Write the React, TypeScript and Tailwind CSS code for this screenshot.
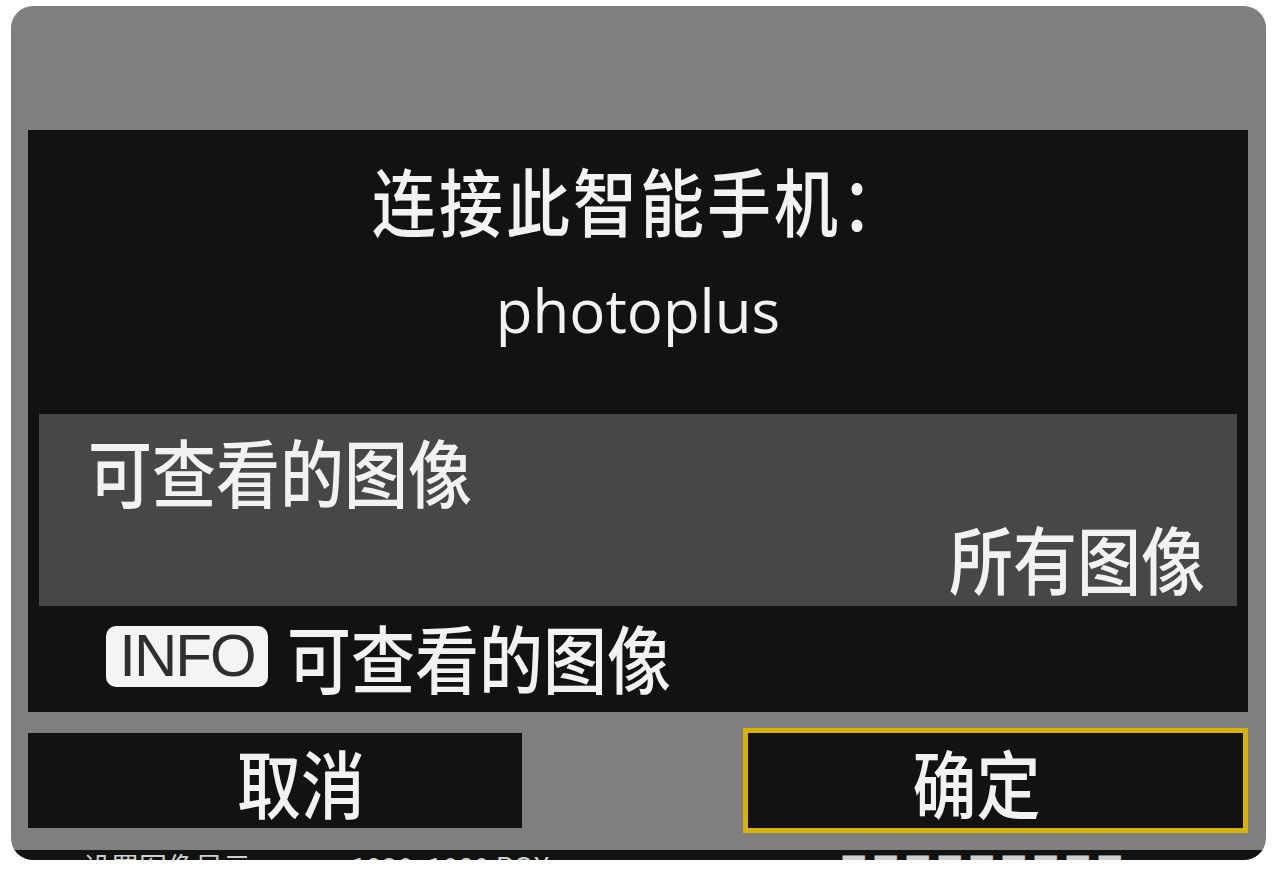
const cjk = "font-['Noto_Sans_CJK_SC','Noto_Sans',sans-serif]";

function Label({ children, className = '' }: { children: React.ReactNode; className?: string }) {
  return (
    <span className={`${cjk} inline-block origin-center scale-y-115 text-[64px] leading-none font-medium text-[#f2f2f2] ${className}`}>
      {children}
    </span>
  );
}

export default function App() {
  return (
    <div className="min-h-screen bg-white pt-[6px] pl-[11px]">
      <div className="flex h-[854px] w-[1255px] flex-col overflow-hidden rounded-[22px] bg-[#7f7f7f]">
        {/* gray header area */}
        <div className="h-[124px] shrink-0" />

        {/* main panel */}
        <div className="ml-[17px] flex h-[582px] w-[1220px] shrink-0 flex-col bg-[#121212]">
          <div className="flex h-[138px] items-center justify-center pl-[4px]">
            <Label className="tracking-[3px]">连接此智能手机：</Label>
          </div>
          <div className="flex h-[98px] items-center justify-center pb-[14px]">
            <span className="font-['Open_Sans','Noto_Sans',sans-serif] text-[60px] leading-none text-[#f2f2f2]">
              photoplus
            </span>
          </div>

          {/* selected row */}
          <div className="mx-[11px] mt-[48px] flex h-[192px] flex-col bg-[#474747]">
            <div className="flex h-[112px] items-center pl-[49px]">
              <Label>可查看的图像</Label>
            </div>
            <div className="flex h-[62px] items-center justify-end pr-[32px]">
              <Label>所有图像</Label>
            </div>
          </div>

          {/* info hint */}
          <div className="flex h-[100px] items-center gap-[19px] pl-[78px]">
            <span className="flex h-[61px] w-[162px] items-center justify-center rounded-[10px] bg-[#f4f4f4] font-['Liberation_Sans',Arial,sans-serif] text-[60px] leading-none tracking-[-2px] text-[#2e2e2e]">
              INFO
            </span>
            <Label>可查看的图像</Label>
          </div>
        </div>

        {/* buttons */}
        <div className="mt-[16px] flex h-[105px] shrink-0 items-center justify-between pl-[17px] pr-[18px]">
          <div className="flex h-[95px] w-[494px] items-center justify-center bg-[#121212] pl-[52px]">
            <Label>取消</Label>
          </div>
          <div className="flex h-[105px] w-[505px] items-center justify-center border-[5px] border-[#d6b300] bg-[#121212] pr-[38px]">
            <Label>确定</Label>
          </div>
        </div>

        <div className="h-[17px] shrink-0" />

        {/* next menu row, cut off by the frame */}
        <div className="flex flex-1 items-start bg-[#121212] pl-[72px]">
          <span className={`${cjk} mt-[2px] text-[28px] leading-none text-[#cfcfcf]`}>设置图像显示</span>
          <span className={`${cjk} ml-[100px] mt-[2px] text-[28px] leading-none text-[#cfcfcf]`}>1920x1080 ROX</span>
          <span className={`${cjk} ml-[290px] mt-[2px] text-[28px] leading-none tracking-[4px] text-[#cfcfcf]`}>■■■■■■■■■</span>
        </div>
      </div>
    </div>
  );
}
